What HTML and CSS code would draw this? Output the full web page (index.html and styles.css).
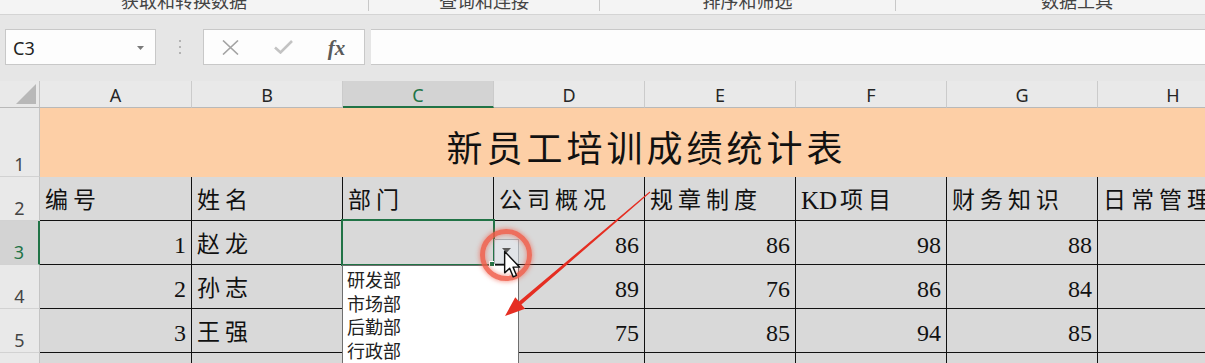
FILE: index.html
```html
<!DOCTYPE html>
<html lang="zh-CN">
<head>
<meta charset="UTF-8">
<meta name="viewport" content="width=device-width, initial-scale=1.0">
<title>新员工培训成绩统计表</title>
<link rel="stylesheet" href="styles.css">
</head>
<body>
<div class="ribbon-groups">
    <div class="group g1"><span>获取和转换数据</span></div>
    <div class="group g2"><span>查询和连接</span></div>
    <div class="group g3"><span>排序和筛选</span></div>
    <div class="group g4"><span>数据工具</span></div>
</div>

<div class="formula-bar">
    <div class="name-box">
        <span>C3</span>
        <svg class="caret" width="7" height="4" viewBox="0 0 7 4"><path d="M0 0h7L3.5 4z" fill="#7a7a7a"/></svg>
    </div>
    <div class="grip"><i></i><i></i><i></i></div>
    <div class="fx-buttons">
        <span class="fx-btn">
            <svg width="17" height="15" viewBox="0 0 17 15"><path d="M1 0.5L16 14.5M16 0.5L1 14.5" stroke="#a3a3a3" stroke-width="1.6" fill="none"/></svg>
        </span>
        <span class="fx-btn">
            <svg width="19" height="14" viewBox="0 0 19 14"><path d="M1 7.5L6.5 12.5L18 1" stroke="#c3c3c3" stroke-width="2.6" fill="none"/></svg>
        </span>
        <span class="fx-btn fx">fx</span>
    </div>
    <div class="formula-input"></div>
</div>

<div class="sheet">
    <div class="corner">
        <svg width="20" height="20" viewBox="0 0 20 20"><path d="M20 0V20H0z" fill="#b8b8b8"/></svg>
    </div>
    <div class="ch">A</div>
    <div class="ch">B</div>
    <div class="ch sel">C</div>
    <div class="ch">D</div>
    <div class="ch">E</div>
    <div class="ch">F</div>
    <div class="ch">G</div>
    <div class="ch">H</div>

    <div class="rh">1</div>
    <div class="title">新员工培训成绩统计表</div>

    <div class="rh">2</div>
    <div class="c">编号</div>
    <div class="c">姓名</div>
    <div class="c">部门</div>
    <div class="c">公司概况</div>
    <div class="c">规章制度</div>
    <div class="c"><span class="latin">KD</span>项目</div>
    <div class="c">财务知识</div>
    <div class="c">日常管理</div>

    <div class="rh sel">3</div>
    <div class="c n">1</div>
    <div class="c">赵龙</div>
    <div class="c"></div>
    <div class="c n">86</div>
    <div class="c n">86</div>
    <div class="c n">98</div>
    <div class="c n">88</div>
    <div class="c n">90</div>

    <div class="rh">4</div>
    <div class="c n">2</div>
    <div class="c">孙志</div>
    <div class="c"></div>
    <div class="c n">89</div>
    <div class="c n">76</div>
    <div class="c n">86</div>
    <div class="c n">84</div>
    <div class="c n">87</div>

    <div class="rh">5</div>
    <div class="c n">3</div>
    <div class="c">王强</div>
    <div class="c"></div>
    <div class="c n">75</div>
    <div class="c n">85</div>
    <div class="c n">94</div>
    <div class="c n">85</div>
    <div class="c n">92</div>

    <div class="rh">6</div>
    <div class="c n">4</div>
    <div class="c">李明</div>
    <div class="c"></div>
    <div class="c n">91</div>
    <div class="c n">80</div>
    <div class="c n">88</div>
    <div class="c n">79</div>
    <div class="c n">86</div>
</div>

<!-- things drawn over the grid -->
<div class="sel-box"></div>

<div class="drop-list">
    <div>研发部</div>
    <div>市场部</div>
    <div>后勤部</div>
    <div>行政部</div>
</div>

<div class="fill-handle"></div>

<div class="drop-btn">
    <svg width="9" height="5" viewBox="0 0 9 5"><path d="M0 0h9L4.5 5z" fill="#5b5b5b"/></svg>
</div>

<div class="ring"></div>

<svg class="cursor" width="19" height="30" viewBox="0 0 13 21">
    <path d="M1 1L1 16L4.5 12.8L7 18.8L9.3 17.8L6.9 12L11.5 12Z" fill="#fff" stroke="#111" stroke-width="1" stroke-linejoin="round"/>
</svg>

<svg class="arrow" width="1205" height="363" viewBox="0 0 1205 363">
    <polygon points="649.7,191.6 650.3,192.4 521.4,304.4 525.1,308.7 505,316 515.3,297.3 519,301.6" fill="#e52e22"/>
</svg>
</body>
</html>
```

FILE: styles.css
```css
* {
    box-sizing: border-box;
}

body {
    margin: 0;
    width: 1205px;
    height: 363px;
    overflow: hidden;
    position: relative;
    background-color: #e6e6e6;
    font-family: "Noto Sans", "Noto Sans CJK SC", sans-serif;
}

/* bottom of the ribbon, group labels cut off */
.ribbon-groups {
    display: flex;
    height: 15px;
    background-color: #f4f4f4;
    border-bottom: 1px solid #d4d4d4;
    overflow: hidden;
}

.group {
    flex-shrink: 0;
    height: 11px;
    overflow: hidden;
    text-align: center;
    font-family: "Noto Sans CJK SC", sans-serif;
    font-size: 18px;
    line-height: 18px;
    color: #444;
    border-right: 1px solid #c8c8c8;
}

.group span {
    display: block;
    margin-top: -9px;
}

.g1 { width: 369px; }
.g2 { width: 231px; }
.g3 { width: 296px; }
.g4 { width: 362px; border-right: none; }

/* name box + formula bar */
.formula-bar {
    display: flex;
    height: 66px;
    padding: 14px 0 16px 5px;
}

.name-box {
    width: 151px;
    display: flex;
    align-items: center;
    justify-content: space-between;
    padding: 2px 11px 0 7px;
    background-color: #fdfdfd;
    border: 1px solid #c8c8c8;
    font-size: 18px;
    color: #222;
}

.grip {
    width: 47px;
    display: flex;
    flex-direction: column;
    align-items: center;
    justify-content: center;
    gap: 4px;
}

.grip i {
    width: 2px;
    height: 2px;
    background-color: #b3b3b3;
}

.fx-buttons {
    width: 162px;
    display: flex;
    align-items: center;
    background-color: #fdfdfd;
    border: 1px solid #c8c8c8;
    margin-right: 6px;
}

.fx-btn {
    width: 53px;
    display: flex;
    justify-content: center;
    align-items: center;
}

.fx {
    font-family: "Liberation Serif", serif;
    font-style: italic;
    font-weight: bold;
    font-size: 21px;
    color: #5a5a5a;
    padding-top: 2px;
}

.formula-input {
    flex: 1;
    background-color: #fdfdfd;
    border-top: 1px solid #c8c8c8;
    border-bottom: 1px solid #c8c8c8;
}

/* the worksheet */
.sheet {
    display: grid;
    grid-template-columns: 40px 152px repeat(7, 151px);
    grid-template-rows: 27px 69px repeat(5, 44px);
    width: 1249px;
}

.corner {
    display: flex;
    align-items: flex-end;
    justify-content: flex-end;
    padding: 0 3px 3px 0;
    background-color: #e9e9e9;
    border-right: 1px solid #c4c4c4;
    border-bottom: 1px solid #b9b9b9;
}

.ch {
    display: flex;
    align-items: flex-end;
    justify-content: center;
    padding-bottom: 3px;
    background-color: #e9e9e9;
    border-right: 1px solid #cbcbcb;
    border-bottom: 1px solid #b9b9b9;
    font-size: 18px;
    line-height: 18px;
    color: #262626;
}

.ch.sel {
    background-color: #d3d3d3;
    border-bottom: 2px solid #217346;
    padding-bottom: 2px;
    color: #217346;
}

.rh {
    display: flex;
    align-items: flex-end;
    justify-content: center;
    padding-bottom: 3px;
    background-color: #e9e9e9;
    border-right: 1px solid #c4c4c4;
    border-bottom: 1px solid #d2d2d2;
    font-size: 18px;
    line-height: 18px;
    color: #444;
}

.rh.sel {
    background-color: #d3d3d3;
    border-right: 2px solid #217346;
    color: #217346;
}

.title {
    grid-column: 2 / span 8;
    display: flex;
    align-items: center;
    justify-content: center;
    padding: 6px 0 0 4px;
    background-color: #fdcfa6;
    font-family: "Noto Sans CJK SC", serif;
    font-size: 36px;
    letter-spacing: 4px;
    color: #111;
}

.c {
    display: flex;
    align-items: flex-end;
    padding: 0 5px 7px 5px;
    background-color: #d9d9d9;
    border-right: 1px solid #111;
    border-bottom: 1px solid #111;
    font-family: "Liberation Serif", "Noto Sans CJK SC", serif;
    font-size: 23px;
    line-height: 24px;
    letter-spacing: 5px;
    color: #111;
    white-space: nowrap;
}

.c .latin {
    font-size: 25px;
    letter-spacing: 0;
    margin-right: 3px;
}

.c.n {
    justify-content: flex-end;
    font-size: 24px;
    letter-spacing: 0;
}

/* overlays */
.sel-box {
    position: absolute;
    left: 341px;
    top: 219px;
    width: 154px;
    height: 47px;
    border: 2px solid #217346;
}

.fill-handle {
    position: absolute;
    left: 489px;
    top: 261px;
    width: 6px;
    height: 6px;
    background-color: #217346;
    border: 1px solid #fff;
}

.drop-list {
    position: absolute;
    left: 342px;
    top: 265px;
    width: 177px;
    height: 110px;
    padding: 2px 4px;
    background-color: #fff;
    border: 1px solid #6f6f6f;
    font-family: "Noto Sans CJK SC", sans-serif;
    font-size: 18px;
    line-height: 23.5px;
    color: #222;
}

.drop-btn {
    position: absolute;
    left: 494px;
    top: 239px;
    width: 25px;
    height: 25px;
    display: flex;
    justify-content: center;
    padding-top: 8px;
    background-color: #e1e4e8;
    border: 1px solid #a9adb2;
}

.ring {
    position: absolute;
    left: 480px;
    top: 229px;
    width: 52px;
    height: 52px;
    border-radius: 50%;
    border: 5px solid rgba(240, 92, 72, 0.85);
    box-shadow: 0 0 4px 1px rgba(240, 92, 72, 0.55), inset 0 0 4px 1px rgba(240, 92, 72, 0.5);
}

.cursor {
    position: absolute;
    left: 503px;
    top: 250px;
}

.arrow {
    position: absolute;
    left: 0;
    top: 0;
    pointer-events: none;
}
```
